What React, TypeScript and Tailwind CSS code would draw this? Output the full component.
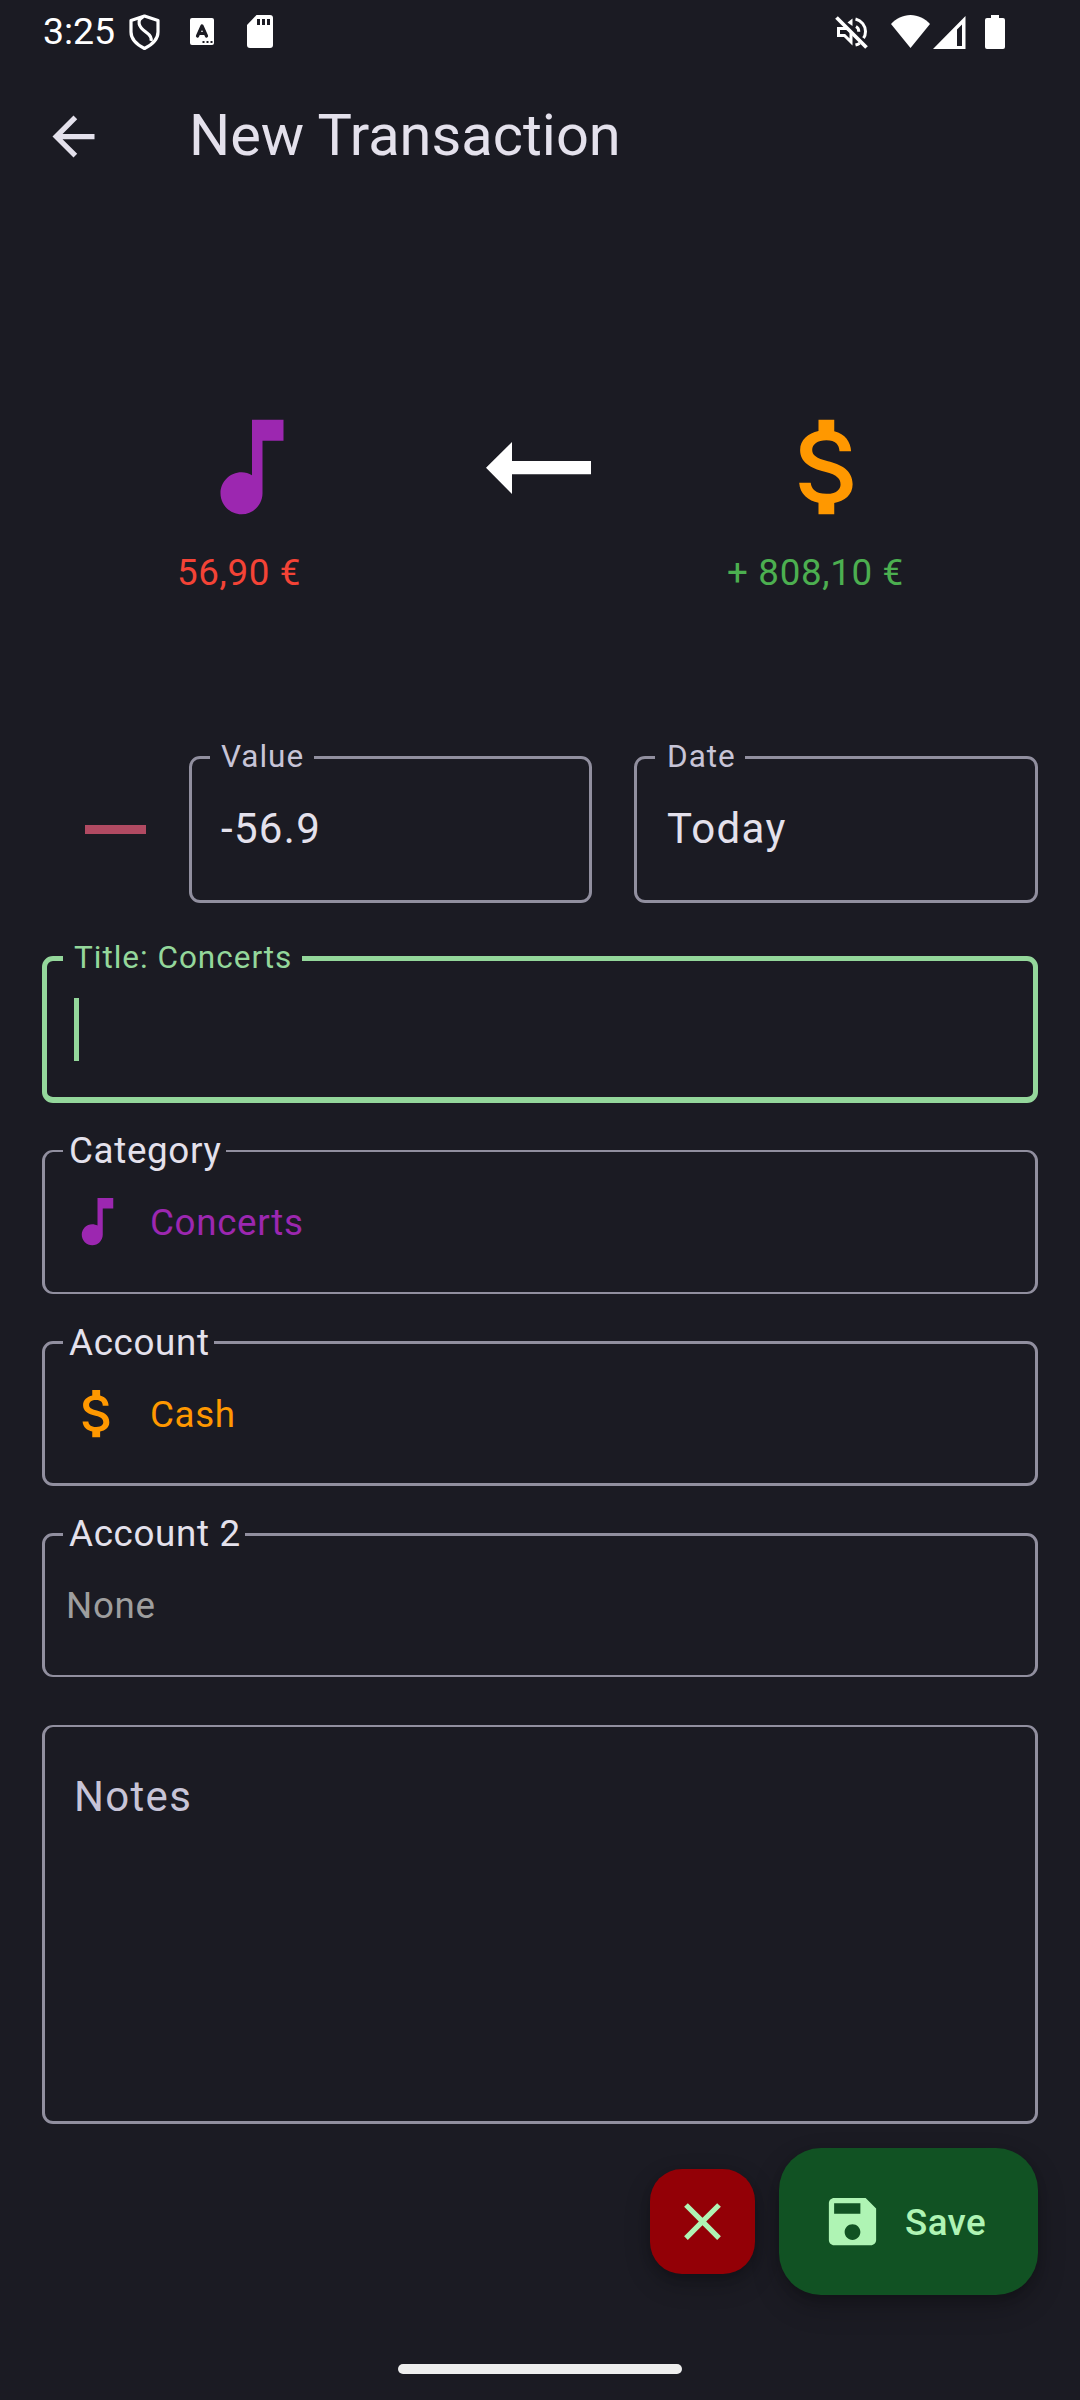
import type { ReactNode } from "react";

function MusicNote({ className }: { className: string }) {
  return (
    <svg viewBox="0 0 24 24" fill="#9c27b0" className={className}>
      <path d="M12 3v10.55c-.59-.34-1.27-.55-2-.55-2.21 0-4 1.79-4 4s1.79 4 4 4 4-1.79 4-4V7h4V3h-6z" />
    </svg>
  );
}

function Dollar({ className }: { className: string }) {
  return (
    <svg viewBox="0 0 24 24" fill="#ff9800" className={className}>
      <path d="M11.8 10.9c-2.27-.59-3-1.2-3-2.15 0-1.09 1.01-1.85 2.7-1.85 1.78 0 2.44.85 2.5 2.1h2.21c-.07-1.72-1.12-3.3-3.21-3.81V3h-3v2.16c-1.94.42-3.5 1.68-3.5 3.61 0 2.31 1.91 3.46 4.7 4.13 2.5.6 3 1.48 3 2.41 0 .69-.49 1.79-2.7 1.79-2.06 0-2.87-.92-2.98-2.1h-2.2c.12 2.19 1.76 3.42 3.68 3.83V21h3v-2.15c1.95-.37 3.5-1.5 3.5-3.55 0-2.84-2.43-3.81-4.7-4.4z" />
    </svg>
  );
}

function StatusBar() {
  return (
    <div className="flex h-[63px] items-center justify-between pl-[43px] pr-[75px] text-white">
      <div className="flex h-full items-center">
        <span className="-mt-px w-[86px] whitespace-nowrap text-[37.5px] leading-[63px] tracking-[-0.1px]">3:25</span>
        <svg className="h-[36px] w-[31px]" viewBox="0 0 31 36" fill="none" stroke="#fff" strokeWidth="3.2">
          <path d="M15.5 2 29 6.500v11.500c0 7-5.500 12.500-13.500 16.500C7.500 30.500 2 25 2 18V6.500z" strokeLinejoin="round" />
          <path d="M14 3c-3.500 1.500-4.500 4-3.800 7 .8 4 4 6 7.300 8.500 3.500 2.500 5.500 5 4.500 8.500" />
        </svg>
        <svg className="ml-[30px] h-[27px] w-[24px]" viewBox="0 0 24 27">
          <rect width="24" height="27" rx="2" fill="#fff" />
          <path d="M7.500 18 12 8 16.500 18M9 15.500h6" fill="none" stroke="#1b1b23" strokeWidth="3.2" strokeLinecap="round" strokeLinejoin="round" />
          <path d="M12.500 23h2v2h-2zM16.500 23h2v2h-2zM20.500 23h2v2h-2z" fill="#1b1b23" />
        </svg>
        <svg className="ml-[33px] h-[33px] w-[26px]" viewBox="0 0 26 33">
          <path d="M9.500 0H23a3 3 0 0 1 3 3v27a3 3 0 0 1-3 3H3a3 3 0 0 1-3-3V10z" fill="#fff" />
          <path d="M10 4h3v6h-3zM15 4h3v6h-3zM20 4h3v6h-3z" fill="#1b1b23" />
        </svg>
      </div>
      <div className="flex h-full items-center">
        <svg className="mt-[2px] h-[33px] w-[33px]" viewBox="0 0 33 33" fill="none" stroke="#fff" strokeWidth="3">
          <path d="M3.500 12.500v7h6l6.500 6.500V15.500L12 12.500z" />
          <path d="M17.500 2.500V10l-5-3.500z" fill="#fff" stroke="none" />
          <path d="M20.500 3c6 1.500 10 6.500 10 12.500 0 2.500-.7 4.800-2 6.700M21 10.500c1.800 1 2.800 2.800 2.800 5.200M20.500 29c1.600-.4 3-1 4.200-1.800" />
          <path d="M1 5 29 33" stroke="#1b1b23" strokeWidth="0" />
          <path d="M2.500-.5 33 30" stroke="#1b1b23" strokeWidth="3" />
          <path d="M1.500 1.500 31.500 31.500" strokeWidth="3.800" />
        </svg>
        <svg className="ml-[23px] h-[33px] w-[39px]" viewBox="0 0 39 33">
          <path d="M19.500 33 0 9C5 3.500 12 0 19.500 0S34 3.500 39 9z" fill="#fff" />
        </svg>
        <svg className="ml-[3px] mt-px h-[33px] w-[33px]" viewBox="0 0 33 33">
          <path d="M32.500 0v33H0zM29 8.500l-5 5V30h5z" fill="#fff" fillRule="evenodd" />
        </svg>
        <svg className="ml-[19px] h-[34px] w-[20px]" viewBox="0 0 20 34">
          <path d="M6 0h8v3h4a2 2 0 0 1 2 2v27a2 2 0 0 1-2 2H2a2 2 0 0 1-2-2V5a2 2 0 0 1 2-2h4z" fill="#fff" />
        </svg>
      </div>
    </div>
  );
}

/* Outlined field: the legend opens a notch in the top border. */
function Field({ className, label, labelClass, children }: { className: string; label: string; labelClass: string; children: ReactNode }) {
  return (
    <fieldset className={"min-w-0 rounded-[11px] " + className}>
      <legend className={"whitespace-nowrap " + labelClass}>{label}</legend>
      {children}
    </fieldset>
  );
}

const floatLabel = "pl-[11px] text-[31.5px] tracking-[0.98px] ";
const pickLabel = "pl-[6px] text-[36.75px] tracking-[0.66px] text-[#e4e1ec] ";

export default function App() {
  return (
    <div className="flex h-[2400px] w-[1080px] flex-col overflow-hidden bg-[#1b1b23] font-['Roboto',sans-serif] text-[#e4e1ec]">
      <StatusBar />

      <header className="flex h-[147px] items-center pl-[42px]">
        <svg className="h-[63px] w-[63px]" viewBox="0 0 24 24" fill="#e4e1ec">
          <path d="M20 11H7.830l5.590-5.590L12 4l-8 8 8 8 1.410-1.410L7.830 13H20v-2z" />
        </svg>
        <h1 className="-mt-[4px] ml-[84px] text-[57.75px] leading-[72px]">New Transaction</h1>
      </header>

      <section className="mt-[194px] flex h-[333px] justify-between px-[126px]">
        <div className="flex w-[251px] flex-col items-center">
          <MusicNote className="h-[126px] w-[126px]" />
          <p className="mr-[25px] mt-[18px] text-[36.75px] leading-[50px] tracking-[0.66px] text-[#f44336]">56,90 €</p>
        </div>
        <svg className="mr-[2px] mt-[38px] h-[52px] w-[106px]" viewBox="0 0 106 52">
          <path d="M0 25.700 26 0v19h79v13.300H26V52z" fill="#fff" />
        </svg>
        <div className="flex w-[251px] flex-col items-center">
          <Dollar className="h-[126px] w-[126px]" />
          <p className="mr-[26px] mt-[18px] text-[36.75px] leading-[50px] tracking-[0.66px] text-[#4caf50]">+ 808,10 €</p>
        </div>
      </section>

      <main className="flex flex-col px-[42px]">
        <div className="flex">
          <div className="mt-[88px] ml-[43px] h-[9px] w-[61px] bg-[#b14a62]" />
          <Field className="ml-[43px] h-[166px] w-[403px] border-[3px] border-[#918f9f] pl-[18px]" label="Value" labelClass={floatLabel + "h-[41px] w-[104px] leading-[39px] text-[#c7c4d7]"}>
            <div className="pl-[11px] text-[42px] leading-[102px] tracking-[1.31px]">-56.9</div>
          </Field>
          <Field className="ml-[42px] h-[166px] w-[404px] border-[3px] border-[#918f9f] pl-[18px]" label="Date" labelClass={"pl-[12px] text-[31.5px] tracking-[0.98px] h-[41px] w-[90px] leading-[39px] text-[#c7c4d7]"}>
            <div className="pl-[12px] text-[42px] leading-[102px] tracking-[1.31px]">Today</div>
          </Field>
        </div>

        <Field className="mt-[34px] h-[166px] border-[5px] border-b-[6px] border-[#94d79b] pl-[16px]" label="Title: Concerts" labelClass={floatLabel + "h-[43px] w-[239px] leading-[41px] text-[#94d79b]"}>
          <div className="mt-[18px] ml-[11px] h-[63px] w-[5px] bg-[#94d79b]" />
        </Field>

        <Field className="mt-[28px] h-[163px] border-x-[3px] border-y-2 border-[#918f9f] pl-[18px]" label="Category" labelClass={pickLabel + "h-[40px] w-[163px] leading-[40px]"}>
          <div className="flex h-[101px] items-center pl-[3px]">
            <MusicNote className="h-[63px] w-[63px]" />
            <span className="ml-[21px] mt-[2px] text-[36.75px] tracking-[0.66px] text-[#9c27b0]">Concerts</span>
          </div>
        </Field>

        <Field className="mt-[28px] h-[164px] border-[3px] border-[#918f9f] pl-[18px]" label="Account" labelClass={pickLabel + "h-[41px] w-[151px] leading-[41px]"}>
          <div className="flex h-[101px] items-center pl-[3px]">
            <Dollar className="h-[63px] w-[63px]" />
            <span className="ml-[21px] mt-[2px] text-[36.75px] tracking-[0.66px] text-[#ff9800]">Cash</span>
          </div>
        </Field>

        <Field className="mt-[28px] h-[163px] border-[3px] border-b-2 border-[#918f9f] pl-[18px]" label="Account 2" labelClass={pickLabel + "h-[41px] w-[182px] leading-[40px]"}>
          <div className="flex h-[101px] items-center pl-[3px]">
            <span className="text-[36.75px] tracking-[0.66px] text-[#9e9e9e]">None</span>
          </div>
        </Field>

        <div className="mt-[48px] h-[399px] rounded-[11px] border-[3px] border-t-2 border-[#918f9f] pl-[29px] pt-[43px] text-[42px] leading-[54px] tracking-[1.31px] text-[#c7c4d7]">
          Notes
        </div>

        <div className="mt-[24px] flex items-center justify-end gap-[24px]">
          <button className="flex h-[105px] w-[105px] items-center justify-center rounded-[32px] bg-[#930006] shadow-[0_10px_26px_rgba(0,0,0,0.22),0_4px_10px_rgba(0,0,0,0.15)]">
            <svg className="h-[63px] w-[63px]" viewBox="0 0 24 24" fill="#aff4b4">
              <path d="M19 6.410 17.590 5 12 10.590 6.410 5 5 6.410 10.590 12 5 17.590 6.410 19 12 13.410 17.590 19 19 17.590 13.410 12z" />
            </svg>
          </button>
          <button className="flex h-[147px] w-[259px] items-center rounded-[42px] bg-[#115223] pl-[42px] shadow-[0_12px_28px_rgba(0,0,0,0.22),0_4px_10px_rgba(0,0,0,0.15)]">
            <svg className="h-[63px] w-[63px]" viewBox="0 0 24 24" fill="#aff4b4">
              <path d="M17 3H5c-1.110 0-2 .9-2 2v14c0 1.100.89 2 2 2h14c1.100 0 2-.9 2-2V7l-4-4zm-5 16c-1.660 0-3-1.340-3-3s1.340-3 3-3 3 1.340 3 3-1.340 3-3 3zm3-10H5V5h10v4z" />
            </svg>
            <span className="ml-[21px] mt-[2px] text-[36.75px] font-medium tracking-[0.4px] text-[#aff4b4]">Save</span>
          </button>
        </div>
      </main>

      <div className="mt-[69px] h-[10px] w-[284px] self-center rounded-[5px] bg-[#eeeeee]" />
    </div>
  );
}
